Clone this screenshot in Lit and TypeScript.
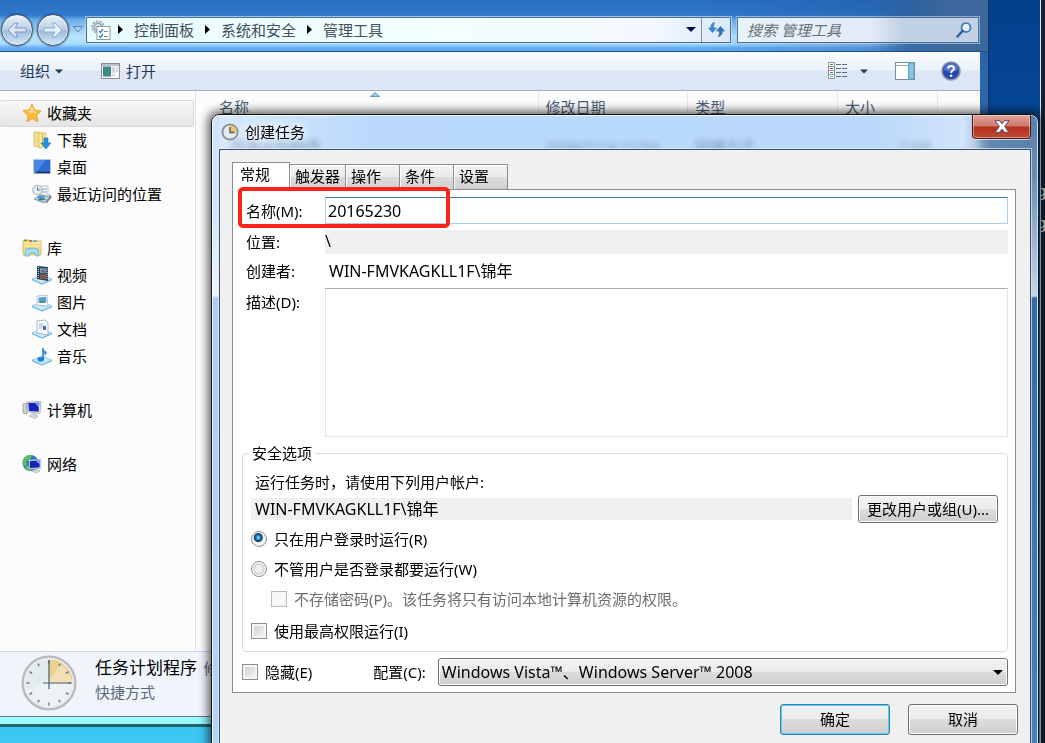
import { LitElement, html, svg, css, nothing } from "lit";
import { customElement, state } from "lit/decorators.js";

const icons: Record<string, unknown> = {
  star: svg`<path d="M10 1 L12.6 7 L19 8 L14.6 12 L16 19 L10.4 15.6 L5 18.6 L6 12.4 L1 7.6 L7.4 7Z" fill="#fdbb3a" stroke="#e8962a" stroke-width=".8"/><path d="M10 3 L11.6 8 L16 9 L10 10 L4 8.4 L8.4 8Z" fill="#ffe08a"/>`,
  downloads: svg`<path d="M2 2h5l2 1v15l-7-2z" fill="#f3dd8c" stroke="#d5b65b" stroke-width=".7"/><path d="M7 3h7v13l-7 2z" fill="#fbe9a8" stroke="#d5b65b" stroke-width=".7"/><path d="M10.600 3v13" stroke="#d0ad4e"/><path d="M12 8h4v5h3l-5 6-5-6h3z" fill="#2b93dd" stroke="#1a6cb5" stroke-width=".6"/>`,
  desktop: svg`<rect x="1" y="2" width="18" height="15" fill="#b4c8e4"/><rect x="2" y="3" width="16" height="12" fill="#2f6ad4"/><path d="M2 3h12L5 15H2z" fill="#4a86e6"/><path d="M2 15.500h16" stroke="#1b2c58" stroke-width="1.500"/><path d="M2 15.500h2" stroke="#5cd08c" stroke-width="1.500"/>`,
  recent: svg`<rect x="8" y="2" width="8" height="9" fill="#f6f9fc" stroke="#aab6c2" stroke-width=".8"/><path d="M10 5h5M10 8h5" stroke="#8fa6bd"/><circle cx="5.500" cy="6" r="4.700" fill="#e5edf2" stroke="#a0acb5"/><path d="M5.500 3v3h3" fill="none" stroke="#63788b"/><path d="M2 15l6-4 10 2-6 6z" fill="#c7d2dc" stroke="#7b8791" stroke-width=".8"/><path d="M5 12h7l2 4-7 1z" fill="#4d9fd9"/><path d="M6 16l3-2 4 2" fill="#477f58"/><path d="M17 11l2 2-5 6" fill="none" stroke="#747c83" stroke-width="1.300"/>`,
  library: svg`<path d="M1 4V2h7l2 1h9v14H1z" fill="#f3d984" stroke="#d3b660" stroke-width=".8"/><path d="M2 2.500h3" stroke="#41a948" stroke-width="1.600"/><path d="M7 3h3" stroke="#df5639" stroke-width="1.600"/><path d="M11 3h4" stroke="#5eabe0" stroke-width="1.600"/><path d="M2 5h17M2 8h17" stroke="#fff0b6"/><path d="M3 18l1-7q6-2 12 0l1 7h-3l-1-3H8l-1 3z" fill="#a4dcf2" stroke="#5bb0da" stroke-width=".8"/>`,
  tray: svg`<path d="M0 14l10-4 10 4-10 5z" fill="#cae9f8" stroke="#8cc4e0" stroke-width=".8"/><path d="M0 14l10 4.500L20 14v1.200l-10 4.300-10-4.300z" fill="#65b2df"/>`,
  video: svg`<path d="M5 1l11 1v14L5 14z" fill="#253c55"/><path d="M8 3l6 .500v5L8 8z" fill="#55a7dd"/><path d="M8 9l6 .500v5L8 13.500z" fill="#8c5148"/><path d="M9 7l2-3 3 4z" fill="#b8462c"/><path d="M6.300 2v12M15 3v12" stroke="#e5f2f7" stroke-width="1" stroke-dasharray="1 1"/>`,
  pictures: svg`<path d="M5 4l10-1 1 11-11-1z" fill="#fff" stroke="#9cb9cb" stroke-width=".8"/><path d="M6.500 5.500l7.500-.700.500 5-8 1z" fill="#4fa3da"/><path d="M6.500 11l3-3 5 3z" fill="#5b9271"/>`,
  documents: svg`<path d="M5 2l8-1 3 3v12l-11-2z" fill="#f7fbfe" stroke="#8fa9bc" stroke-width=".8"/><path d="M7 5h4M7 7h5M7 9h3" stroke="#9bb4c8"/><rect x="11" y="7" width="3" height="4" fill="#4b6fa5"/>`,
  music: svg`<path d="M11 2v11" stroke="#1c76bd" stroke-width="1.500"/><path d="M11 1q0 3 4 5-1 3-2 4 0-3-2-4z" fill="#2e95d8"/><ellipse cx="8.700" cy="13.300" rx="3.300" ry="2.400" fill="#1d84cf"/>`,
  computer: svg`<path d="M1 4l4-1v11l-4-1z" fill="#cbd0d3" stroke="#8d9397" stroke-width=".7"/><path d="M5 2l14-.500-1 12L6 12z" fill="#e4e6e8" stroke="#9a9fa4" stroke-width=".7"/><path d="M6.300 3l11-.300-.700 9L7 11z" fill="#1622b8"/><path d="M13 2.700l4.300 0-.500 5z" fill="#6ca5ef"/><path d="M7 16l5-3 4 3-3 2.500z" fill="#d4d7d9" stroke="#a5aaad" stroke-width=".6"/>`,
  network: svg`<circle cx="8.500" cy="9" r="8" fill="#2d78c8"/><path d="M2 4q4-4 8-3l-2 5-4 1 1 4-3 1q-3-4 0-8z" fill="#5dc05a"/><path d="M5 12l4 1 0 4q-4-1-6-4z" fill="#82c64d"/><path d="M7 6l12-.500-.500 9-11 .500z" fill="#dfe6ef" stroke="#9ba9bb" stroke-width=".6"/><path d="M8 7l10-.500-.500 7L8 14z" fill="#1425b6"/><path d="M14 6.700l4-.200-.400 4z" fill="#79a9ee"/><path d="M10 17l4-2 4 2-4 2z" fill="#d2d6d9" stroke="#a0a7ad" stroke-width=".6"/>`,
};
const onTray = new Set(["video", "pictures", "documents", "music"]);

interface Place { icon: string; label: string; }
const groups: { head: Place; items: Place[] }[] = [
  { head: { icon: "star", label: "收藏夹" }, items: [
    { icon: "downloads", label: "下载" },
    { icon: "desktop", label: "桌面" },
    { icon: "recent", label: "最近访问的位置" } ] },
  { head: { icon: "library", label: "库" }, items: [
    { icon: "video", label: "视频" },
    { icon: "pictures", label: "图片" },
    { icon: "documents", label: "文档" },
    { icon: "music", label: "音乐" } ] },
  { head: { icon: "computer", label: "计算机" }, items: [] },
  { head: { icon: "network", label: "网络" }, items: [] },
];

const base = css`
  :host { font-family: "Noto Sans", "Noto Sans CJK SC", sans-serif; font-size: 15px; line-height: 20px; color: #000; }
  * { box-sizing: border-box; }
  button, input, select, textarea { font: inherit; color: inherit; margin: 0; }
  button { padding: 0; border: 0; background: none; }
  a { color: inherit; text-decoration: none; }
  svg { display: block; flex: none; }
`;

const largeClock = html`
  <svg width="56" height="56" viewBox="0 0 56 56" aria-hidden="true">
    <circle cx="28" cy="28" r="26" fill="#e3ebee" stroke="#b9b9bf" stroke-width="3"/>
    <path d="M28 28V4a24 24 0 0 1 24 24z" fill="#ecd08c"/>
    <path d="M5 34Q28 32 38 9q14 8 13 22Q47 50 28 51 10 50 5 34z" fill="#fff" opacity=".35"/>
    <circle cx="28" cy="28" r="24.500" fill="none" stroke="#ededf0" stroke-width="1.500"/>
    <g stroke="#67818d" stroke-width="1.500">
      ${[0, 30, 60, 90, 120, 150, 180, 210, 240, 270, 300, 330].map(
        (a) => svg`<path d="M28 5.500v3" transform="rotate(${a} 28 28)"/>`)}
    </g>
    <path d="M28 5v29M22 28h28" stroke="#466170" stroke-width="1.200"/>
  </svg>`;

const smallClock = html`
  <svg width="18" height="18" viewBox="0 0 18 18" aria-hidden="true">
    <circle cx="9" cy="9" r="7.600" fill="#e6ecee" stroke="#8f9296" stroke-width="2"/>
    <path d="M9 9V2.500A6.500 6.500 0 0 1 15.500 9z" fill="#f0c868"/>
    <path d="M9 4v5.500h4.500" fill="none" stroke="#4c565e" stroke-width="1.400"/>
  </svg>`;

@customElement("explorer-window")
class ExplorerWindow extends LitElement {
  static styles = [base, css`
    :host { display: flex; flex-direction: column; border-right: 1px solid #16345f; border-bottom: 3px solid #24636e; padding: 0 8px 7px 0;
      background: linear-gradient(90deg, #9ffcff, #7df2f8) bottom / 100% 11px no-repeat,
        linear-gradient(180deg, #1f5ba7 0, #2b64a8 60px, #4e8fd0 100%); }
    .nav { display: flex; align-items: center; height: 52px; padding: 8px 9px 0 1px; margin-right: -8px; border-bottom: 1px solid #234b7c;
      background: linear-gradient(90deg, #0000 70%, #15478c44 88%, #2d5f9bdd 92%, #3c689d 96%), linear-gradient(180deg, #2b6fc2 0, #2f78cb 15px, #6caee9 20px, #b9e5fc 36px, #a8dcff 44px, #62abf4 48px, #62abf4 51px); }
    .round { width: 32px; height: 32px; margin-right: 4px; border: 1px solid #45505c; border-radius: 50%; display: grid; place-items: center;
      background: linear-gradient(180deg, #eaf3fb, #b5cde6 50%, #9bbbdc 52%, #d2e8f8); box-shadow: inset 0 0 0 1px #ffffffaa, 0 0 2px #13386d; }
    .recent-menu { width: 10px; }
    .address { flex: 1; display: flex; align-items: center; height: 26px; margin-left: 3px; padding-left: 4px; border: 1px solid #4f708f;
      background: linear-gradient(90deg, #e8fbff, #f2ffff 50%, #f3f8fe 88%, #dbe8f8); box-shadow: 0 0 0 1px #c4e2f7aa; color: #444e58; }
    .crumbs { display: flex; align-items: center; flex: 1; list-style: none; margin: 0; padding: 0; white-space: nowrap; }
    .crumbs li { display: flex; align-items: center; }
    .crumbs svg { margin: 0 11px; }
    .crumbs li:first-child svg { margin-left: 7px; }
    .drop { width: 21px; height: 24px; display: grid; place-items: center; }
    .refresh { width: 29px; height: 24px; border-left: 1px solid #7d8fa0; display: grid; place-items: center; }
    .search { display: flex; align-items: center; width: 242px; height: 26px; margin-left: 6px; padding: 0 6px 0 9px; border: 1px solid #4f6f96;
      background: linear-gradient(90deg, #e8f3fc, #e3ecf6 55%, #c3d1e4 68%); box-shadow: 0 0 0 1px #b4cfe8aa; }
    .search input { flex: 1; min-width: 0; border: 0; background: none; padding: 0; outline: 0; font-style: italic; }
    .search input::placeholder { color: #6b7076; opacity: 1; }
    .toolbar { display: flex; align-items: center; height: 39px; padding: 0 19px 0 20px; color: #1e395b; border-bottom: 1px solid #a0afc3;
      background: linear-gradient(180deg, #fafdff 0, #eaf1fa 18px, #dce6f4 19px, #dde8f6 100%); }
    .toolbar button { display: flex; align-items: center; gap: 5px; }
    .toolbar .open { margin-left: 38px; gap: 6px; }
    .toolbar .view { margin-left: auto; gap: 13px; }
    .toolbar .preview { margin-left: 27px; }
    .toolbar .help { margin-left: 26px; }
    .body { flex: 1; min-height: 0; display: grid; grid-template-columns: 196px 1fr; background: #fcfcfc; }
    .side { padding-top: 9px; border-right: 1px solid #d6e5f5; }
    .side ul { list-style: none; margin: 0 0 27px; padding: 0; }
    .place { display: flex; align-items: center; gap: 5px; height: 27px; padding: 0 0 2px 32px; margin-right: 1px; }
    .head { padding-left: 22px; }
    .chosen { border: 1px solid #d9d9d9; border-left: 0; border-radius: 2px; background: linear-gradient(#f8f8f8, #e5e5e5); }
    table { width: 742px; table-layout: fixed; border-collapse: collapse; height: max-content; }
    th { position: relative; height: 32px; padding: 0 7px; border-right: 1px solid #dfeaf5; font-weight: 400; text-align: left; color: #4c607a; }
    th:first-child { padding-left: 23px; width: 342px; }
    th:nth-child(4) { width: 100px; }
    td { height: 46px; padding: 0 7px; color: #000; white-space: nowrap; }
    td:first-child { padding-left: 35px; }
    td:last-child { text-align: right; }
    .sort { position: absolute; left: 174px; top: 1px; }
    .details { display: flex; align-items: center; gap: 18px; height: 66px; padding: 0 0 2px 21px; border-top: 1px solid #c5d5ea; border-bottom: 1px solid #6a7b85; background: #f0f4fb; }
    .summary { padding-bottom: 6px; }
    .name { font-size: 17px; line-height: 24px; }
    .meta { color: #5a6779; line-height: 24px; }
    .more { margin-left: 2px; font-size: 15px; color: #5a6779; }
  `];

  private caret(color: string, w = 8) {
    return html`<svg width=${w} height="5" viewBox="0 0 10 5" aria-hidden="true"><path d="M0 0h10L5 5z" fill=${color}/></svg>`;
  }

  private place(p: Place, cls: string) {
    return html`<li><a href="#" class="place ${cls}">
      <svg width="20" height="20" viewBox="0 0 20 20" aria-hidden="true">${onTray.has(p.icon) ? icons.tray : nothing}${icons[p.icon]}</svg>
      <span>${p.label}</span></a></li>`;
  }

  render() {
    return html`
      <nav class="nav">
        <button class="round" aria-label="后退"><svg width="20" height="16" viewBox="0 0 20 16"><path d="M8 1L1 8l7 7h3l-3-5h11V6H8l3-5z" fill="#dce5f6" stroke="#8892c4"/></svg></button>
        <button class="round" aria-label="前进"><svg width="20" height="16" viewBox="0 0 20 16"><path d="M12 1l7 7-7 7H9l3-5H1V6h11L9 1z" fill="#e7f1fa" stroke="#94acc9"/></svg></button>
        <button class="recent-menu" aria-label="最近的页面"><svg width="10" height="7" viewBox="0 0 10 7"><path d="M.500.500h9L5 6z" fill="#b4d2ee" stroke="#5f86ae"/></svg></button>
        <div class="address">
          <svg width="20" height="20" viewBox="0 0 20 20" aria-hidden="true">
            <circle cx="7" cy="7" r="5" fill="none" stroke="#a9b3bc" stroke-width="3.500" stroke-dasharray="2.200 .800"/>
            <circle cx="7" cy="7" r="3.600" fill="#dce4ea" stroke="#8f9ca8"/>
            <rect x="6" y="6.500" width="13" height="13" fill="#fff" stroke="#8d959e"/>
            <path d="M8 11l1.500 1.500L12 9M8 16l1.500 1.500L12 14" fill="none" stroke="#2a86cb" stroke-width="1.300"/><path d="M13 11.500h4M13 16.500h4" stroke="#848d96"/>
          </svg>
          <ul class="crumbs">
            ${["控制面板", "系统和安全", "管理工具"].map((t) => html`<li><svg width="5" height="9" viewBox="0 0 5 9" aria-hidden="true"><path d="M0 0l5 4.500L0 9z"/></svg><a href="#">${t}</a></li>`)}
          </ul>
          <button class="drop" aria-label="以前的位置">${this.caret("#000a50", 10)}</button>
          <button class="refresh" aria-label="刷新"><svg width="17" height="15" viewBox="0 0 17 15"><path d="M6.500.500Q2.500 1.500 2.800 6H.500L4.500 10.500 8.500 6H5.500Q5.300 3 6.500.500z" fill="#3c8dd6" stroke="#2767a8" stroke-width=".6"/><path d="M10.500 14.500Q14.500 13.500 14.200 9H16.500L12.500 4.500 8.500 9h3Q11.700 12 10.500 14.500z" fill="#2f74bd" stroke="#1f5797" stroke-width=".6"/></svg></button>
        </div>
        <div class="search">
          <input type="search" placeholder="搜索 管理工具" aria-label="搜索 管理工具" />
          <svg width="16" height="16" viewBox="0 0 16 16" aria-hidden="true"><circle cx="10" cy="5.500" r="4.500" fill="#e4f1fb" stroke="#3b78b4" stroke-width="1.700"/><path d="M6.500 9l-5 5.500" stroke="#2a619c" stroke-width="2.500" stroke-linecap="round"/></svg>
        </div>
      </nav>
      <div class="toolbar">
        <button>组织${this.caret("#1e395b")}</button>
        <button class="open"><svg width="19" height="16" viewBox="0 0 19 16" aria-hidden="true"><rect x=".500" y=".500" width="18" height="15" fill="#f7f7f7" stroke="#8a9096"/><path d="M1 2h17" stroke="#b8bfc6" stroke-width="2"/><rect x="2.500" y="4" width="7" height="9" fill="#3e8f77" stroke="#4a7caa"/><path d="M11 5h3M11 7h3M11 9h3M11 12h3M16 4v5" stroke="#aab2ba"/></svg>打开</button>
        <button class="view" aria-label="更改您的视图"><svg width="19" height="18" viewBox="0 0 19 18"><rect x=".500" y=".500" width="6" height="16" fill="#fff" stroke="#8b97a6"/><path d="M0 4.500h7M0 8.500h7M0 12.500h7" stroke="#8b97a6"/><path d="M8 2.500h5m1 0h5M8 6.500h5m1 0h5M8 10.500h5m1 0h5M8 14.500h5m1 0h5" stroke="#5b6f88"/><path d="M2 2.500h3" stroke="#4c9c4f"/><path d="M2 6.500h3" stroke="#d33"/><path d="M2 10.500h3" stroke="#3b7fd0"/><path d="M2 14.500h3" stroke="#9aba26"/></svg>${this.caret("#1e395b")}</button>
        <button class="preview" aria-label="显示预览窗格"><svg width="20" height="18" viewBox="0 0 20 18"><rect x=".500" y=".500" width="19" height="17" fill="#fff" stroke="#7d8da0"/><path d="M1 3.500h12" stroke="#9aa6b4"/><rect x="13.500" y="1" width="5.500" height="16" fill="#8bc4e0" stroke="#5d9fc4"/></svg></button>
        <button class="help" aria-label="获取帮助"><svg width="20" height="20" viewBox="0 0 20 20"><circle cx="10" cy="10" r="9" fill="#2448b4" stroke="#8e97a8" stroke-width="1.600"/><path d="M3 9a7 7 0 0 1 14 0q-7 3-14 0z" fill="#6c8de0" opacity=".65"/><path d="M7 7.600q.200-2.600 3-2.600t3 2.400q0 1.400-1.500 2.200T10.200 12" fill="none" stroke="#fff" stroke-width="2"/><circle cx="10.100" cy="14.700" r="1.300" fill="#fff"/></svg></button>
      </div>
      <div class="body">
        <aside class="side">
          ${groups.map((g, i) => html`<ul>${this.place(g.head, i === 0 ? "head chosen" : "head")}${g.items.map((p) => this.place(p, ""))}</ul>`)}
        </aside>
        <table>
          <thead><tr><th>名称<svg class="sort" width="10" height="5" viewBox="0 0 10 5" aria-hidden="true"><path d="M.500 4.500h9L5 .500z" fill="#8fd0e8" stroke="#4b87a8" stroke-width=".8"/></svg></th><th>修改日期</th><th>类型</th><th>大小</th></tr></thead>
          <tbody><tr><td>任务计划程序</td><td>2009/7/14 12:54</td><td>快捷方式</td><td>2 KB</td></tr></tbody>
        </table>
      </div>
      <footer class="details">
        ${largeClock}
        <div class="summary"><div class="name">任务计划程序 <span class="more">修改日期</span></div><div class="meta">快捷方式</div></div>
      </footer>`;
  }
}

@customElement("task-dialog")
class TaskDialog extends LitElement {
  @state() private mode = "logged-on";
  @state() private tab = "常规";

  static styles = [base, css`
    :host { display: block; padding: 0 7px 8px; border: 1px solid #10151c; border-radius: 8px 8px 0 0; backdrop-filter: blur(3px);
      background:
        linear-gradient(180deg, #c5defa88 0, #cfe3fa 90px, #eef5fe 181px, #a9cdf7 183px, #b5d5fa 100%) left / 8px 100% no-repeat,
        linear-gradient(180deg, #7390b300 0, #6d8cb1 60px, #c7d7e8 181px, #386ba6 183px, #4b80bc 100%) right / 8px 100% no-repeat,
        linear-gradient(90deg, #c8e0fbaa, #a0ccfbb8 20%, #a0ccfbb8 80%, #c0dafab8 91%, #7c98bacc 94%, #6e8cafcc 100%);
      box-shadow: inset 1px 1px 0 #ffffffcc, inset -1px 0 0 #c7e6f5, 0 0 10px 3px #000000a0; }
    .title { display: flex; height: 34px; padding-left: 2px; }
    .caption { display: flex; align-items: center; gap: 6px; }
    h1 { margin: 0; font-size: 15px; line-height: 20px; font-weight: 400; text-shadow: 0 0 8px #fff, 0 0 8px #fff; }
    .close { width: 59px; height: 24px; margin-left: auto; border: 1px solid #4a1a18; border-top: 0; border-radius: 0 0 4px 4px; display: grid; place-items: center;
      background: linear-gradient(180deg, #dfa49b 0, #cf786c 11px, #b5301d 12px, #c04a35 100%); box-shadow: inset 0 0 0 1px #ffffff66, 0 1px 0 #ffffffaa; }
    .client { padding: 12px 14px 16px 12px; background: #f0f0f0; border: 1px solid #3c5068; box-shadow: 0 0 0 1px #e0f0fcaa; }
    .tabs { display: flex; align-items: flex-end; position: relative; z-index: 1; margin-bottom: -1px; }
    .tab { height: 26px; padding: 0 5px 2px; text-align: left; border: 1px solid #898c95; border-left-width: 0; background: linear-gradient(#f2f2f2, #ebebeb 48%, #dcdcdc 52%, #d0d0d0);
      min-width: 54px; box-shadow: inset 1px 1px 0 #fff; }
    .tab[aria-selected="true"] { height: 28px; min-width: 58px; padding: 0 7px 4px; border-left-width: 1px; border-bottom-color: #fff; background: #fff; }
    .panel { padding: 7px 7px 6px 9px; background: #fff; border: 1px solid #898c95; }
    .fields { position: relative; display: grid; grid-template-columns: 79px 1fr; row-gap: 6px; padding-left: 4px; align-items: center; }
    .fields input { width: 100%; height: 27px; padding: 0 2px; border: 1px solid #abd0e6; border-top-color: #3d7bad; border-radius: 1px; background: #fff; outline: 0; }
    .fields input, .fields .author, .account output, select { font-size: 16px; }
    .fields .location { height: 24px; background: #f0f0f0; padding: 1px 0; font-size: 16px; }
    .fields .author { height: 22px; padding: 1px 4px; }
    .fields .top { align-self: start; padding-top: 4px; }
    textarea { display: block; width: 100%; height: 149px; border: 1px solid #e0e4ea; border-top-color: #abadb3; resize: none; outline: 0; background: #fff; }
    .marker { position: absolute; z-index: 2; left: -4px; top: -10px; width: 212px; height: 41px; border: 4px solid #fb2418; border-radius: 5px; pointer-events: none; }
    fieldset { margin: 6px 0 0; min-width: 0; padding: 8px 9px 5px 8px; border: 1px solid #d5dfe5; border-radius: 4px; }
    legend { padding: 0 3px; margin-left: -2px; line-height: 20px; }
    p { margin: 0; padding-left: 4px; line-height: 22px; }
    .account { display: flex; align-items: center; gap: 6px; margin: 2px 0 1px; }
    .account output { flex: 1; height: 22px; padding: 0 4px; line-height: 22px; background: #f0f0f0; }
    .option { display: flex; align-items: center; gap: 7px; height: 30px; width: max-content; }
    .indent { padding-left: 20px; color: #6d6d6d; }
    .last { margin-top: 2px; }
    input[type="radio"], input[type="checkbox"] { appearance: none; flex: none; width: 16px; height: 16px; border: 1px solid #8e8f8f; background: linear-gradient(135deg, #c9cdd2, #f8f8f8); box-shadow: inset 0 0 0 2px #f6f6f6; }
    input[type="radio"] { border-radius: 50%; background: radial-gradient(circle, #eceef0 0 4px, #c0c5cb 5px, #f8f8f8 6px); box-shadow: none; }
    input[type="radio"]:checked { background: radial-gradient(circle at 45% 40%, #a7ecff 0, #2288be 2px, #13375a 4px, #13375a00 5px), #f1f4f6; }
    input[type="checkbox"]:disabled { border-color: #b9bcbf; background: #f9f9f9; }
    .bottom { display: flex; align-items: center; margin-top: 6px; }
    .bottom .option { height: 28px; }
    .bottom .config { margin-left: 61px; margin-right: 12px; }
    .pick { position: relative; flex: 1; }
    .pick svg { position: absolute; right: 5px; top: 12px; pointer-events: none; }
    .push, select { border: 1px solid #707070; border-radius: 3px; background: linear-gradient(#f3f3f3, #ebebeb 48%, #dddddd 50%, #cfcfcf); box-shadow: inset 0 0 0 1px #fcfcfc; }
    select { appearance: none; display: block; width: 100%; height: 28px; padding: 0 20px 0 3px; }
    .push { height: 31px; width: 110px; padding-bottom: 1px; }
    .change { width: auto; height: 28px; padding: 0 8px 1px; }
    .default { border-color: #3c7fb1; box-shadow: inset 0 0 0 1px #4fd2f5; }
    .actions { display: flex; justify-content: flex-end; gap: 18px; margin: 11px -2px 0 0; }
  `];

  render() {
    return html`
      <header class="title">
        <div class="caption">${smallClock}<h1>创建任务</h1></div>
        <button class="close" aria-label="关闭"><svg width="16" height="13" viewBox="0 0 16 13"><path d="M1 .700h4.500L8 3.800 10.500.700H15L10.600 6.500 15 12.300h-4.500L8 9.200l-2.500 3.100H1l4.400-5.800z" fill="#fff" stroke="#53485a"/></svg></button>
      </header>
      <div class="client">
        <div class="tabs" role="tablist">
          ${["常规", "触发器", "操作", "条件", "设置"].map((t) => html`<button class="tab" role="tab" aria-selected=${t === this.tab ? "true" : "false"} @click=${() => (this.tab = t)}>${t}</button>`)}
        </div>
        <div class="panel" role="tabpanel">
          <div class="fields">
            <label for="name">名称(M):</label><input id="name" .value=${"20165230"} />
            <span>位置:</span><div class="location">\\</div>
            <span>创建者:</span><div class="author">WIN-FMVKAGKLL1F\\锦年</div>
            <label for="desc" class="top">描述(D):</label><textarea id="desc"></textarea>
            <div class="marker"></div>
          </div>
          <fieldset>
            <legend>安全选项</legend>
            <p>运行任务时，请使用下列用户帐户:</p>
            <div class="account"><output>WIN-FMVKAGKLL1F\\锦年</output><button class="push change">更改用户或组(U)...</button></div>
            <label class="option"><input type="radio" name="run" .checked=${this.mode === "logged-on"} @change=${() => (this.mode = "logged-on")} />只在用户登录时运行(R)</label>
            <label class="option"><input type="radio" name="run" .checked=${this.mode === "always"} @change=${() => (this.mode = "always")} />不管用户是否登录都要运行(W)</label>
            <label class="option indent"><input type="checkbox" ?disabled=${this.mode === "logged-on"} />不存储密码(P)。该任务将只有访问本地计算机资源的权限。</label>
            <label class="option last"><input type="checkbox" />使用最高权限运行(I)</label>
          </fieldset>
          <div class="bottom">
            <label class="option"><input type="checkbox" />隐藏(E)</label>
            <label class="config" for="config">配置(C):</label>
            <div class="pick"><select id="config"><option>Windows Vista™、Windows Server™ 2008</option></select>
              <svg width="10" height="5" viewBox="0 0 10 5" aria-hidden="true"><path d="M0 0h10L5 5z"/></svg></div>
          </div>
        </div>
        <div class="actions"><button class="push default">确定</button><button class="push">取消</button></div>
      </div>`;
  }
}

@customElement("app-root")
class AppRoot extends LitElement {
  static styles = [base, css`
    :host { display: block; position: relative; height: 100vh; overflow: hidden; 
      background: linear-gradient(180deg, #04408c 0, #054796 120px, #1a7fc8 60%, #36c4f2 96%, #3dc8f4 100%); }
    .behind { position: absolute; top: 0; right: 0; bottom: 0; width: 5px; overflow: hidden; padding-top: 180px; border-left: 1px solid #dfe8ee; background: #191f33; color: #dfe2e8; line-height: 32px; }
    .behind div { margin-top: -6px; margin-bottom: 6px; margin-left: -4px; }
    explorer-window { position: absolute; left: 0; top: 0; right: 56px; bottom: 16px; }
    task-dialog { position: absolute; left: 211px; right: 6px; top: 114px; }
  `];
  render() {
    return html`
      <aside class="behind"><div>g</div><div>g</div></aside>
      <explorer-window></explorer-window>
      <task-dialog></task-dialog>`;
  }
}
